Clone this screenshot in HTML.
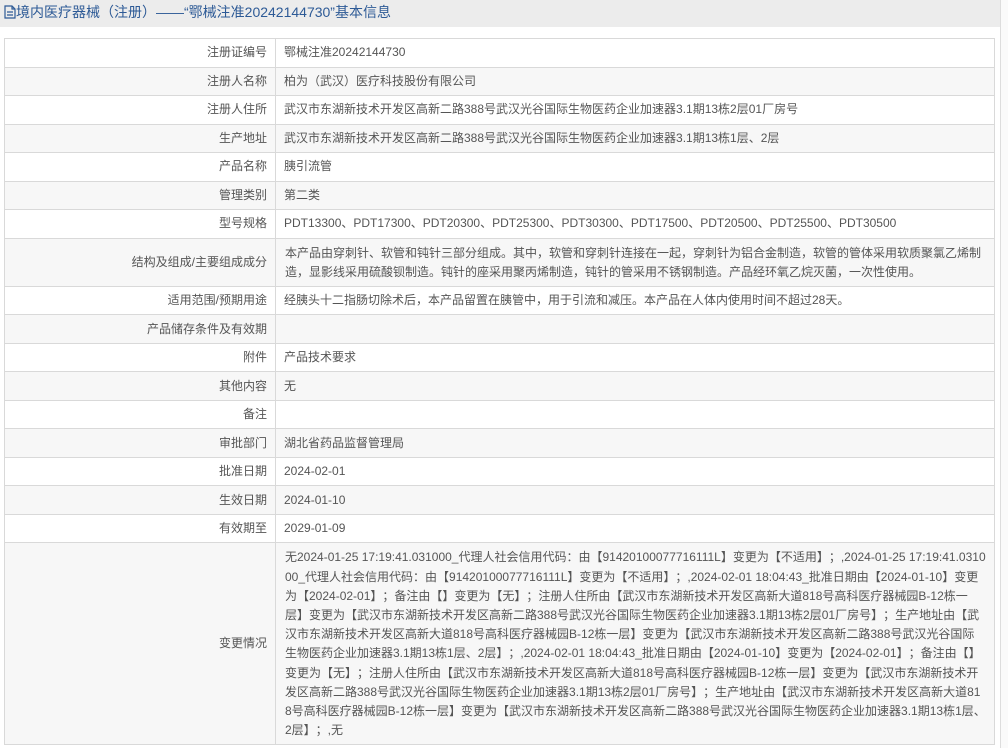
<!DOCTYPE html>
<html><head><meta charset="utf-8"><style>
body{margin:0;background:#fff;font-family:"Liberation Sans","Noto Sans CJK SC",sans-serif;width:1008px;height:748px;overflow:hidden;text-spacing-trim:space-all}
.hd{height:27px;background:#ececec;color:#2d5a96;font-size:14px;line-height:25px;padding-left:4px}
.hd svg{vertical-align:-2px}
table{position:absolute;left:4px;top:38px;width:991px;border-collapse:collapse;font-size:12px;color:#555}
td{border:1px solid #d9d9d9;padding:0 8px;height:27.5px;line-height:19.2px;word-break:break-all}
td.l{width:254px;text-align:right}
tr:nth-child(even) td{background:#f7f7f7}
td.v{padding:5px 8px 4px 9px}
.edge{position:absolute;left:1000px;top:0;width:8px;height:748px;border-left:1px solid #ddd;background:#fafafa}
</style></head><body>
<div class="hd"><svg width="12" height="14" viewBox="0 0 12 14"><path d="M1 1h7l3 3v9H1z M8 1v3h3 M3 7h6 M3 10h6" fill="none" stroke="#2d5a96" stroke-width="1.2"/></svg>境内医疗器械（注册）——“鄂械注准20242144730”基本信息</div>
<table>
<tr><td class="l">注册证编号</td><td>鄂械注准20242144730</td></tr>
<tr><td class="l">注册人名称</td><td>柏为（武汉）医疗科技股份有限公司</td></tr>
<tr><td class="l">注册人住所</td><td>武汉市东湖新技术开发区高新二路388号武汉光谷国际生物医药企业加速器3.1期13栋2层01厂房号</td></tr>
<tr><td class="l">生产地址</td><td>武汉市东湖新技术开发区高新二路388号武汉光谷国际生物医药企业加速器3.1期13栋1层、2层</td></tr>
<tr><td class="l">产品名称</td><td>胰引流管</td></tr>
<tr><td class="l">管理类别</td><td>第二类</td></tr>
<tr><td class="l">型号规格</td><td>PDT13300、PDT17300、PDT20300、PDT25300、PDT30300、PDT17500、PDT20500、PDT25500、PDT30500</td></tr>
<tr><td class="l">结构及组成/主要组成成分</td><td class="v">本产品由穿刺针、软管和钝针三部分组成。其中，软管和穿刺针连接在一起，穿刺针为铝合金制造，软管的管体采用软质聚氯乙烯制造，显影线采用硫酸钡制造。钝针的座采用聚丙烯制造，钝针的管采用不锈钢制造。产品经环氧乙烷灭菌，一次性使用。</td></tr>
<tr><td class="l">适用范围/预期用途</td><td>经胰头十二指肠切除术后，本产品留置在胰管中，用于引流和减压。本产品在人体内使用时间不超过28天。</td></tr>
<tr><td class="l">产品储存条件及有效期</td><td></td></tr>
<tr><td class="l">附件</td><td>产品技术要求</td></tr>
<tr><td class="l">其他内容</td><td>无</td></tr>
<tr><td class="l">备注</td><td></td></tr>
<tr><td class="l">审批部门</td><td>湖北省药品监督管理局</td></tr>
<tr><td class="l">批准日期</td><td>2024-02-01</td></tr>
<tr><td class="l">生效日期</td><td>2024-01-10</td></tr>
<tr><td class="l">有效期至</td><td>2029-01-09</td></tr>
<tr><td class="l">变更情况</td><td class="v">无2024-01-25 17:19:41.031000_代理人社会信用代码：由【91420100077716111L】变更为【不适用】；,2024-01-25 17:19:41.031000_代理人社会信用代码：由【91420100077716111L】变更为【不适用】；,2024-02-01 18:04:43_批准日期由【2024-01-10】变更为【2024-02-01】；备注由【】变更为【无】；注册人住所由【武汉市东湖新技术开发区高新大道818号高科医疗器械园B-12栋一层】变更为【武汉市东湖新技术开发区高新二路388号武汉光谷国际生物医药企业加速器3.1期13栋2层01厂房号】；生产地址由【武汉市东湖新技术开发区高新大道818号高科医疗器械园B-12栋一层】变更为【武汉市东湖新技术开发区高新二路388号武汉光谷国际生物医药企业加速器3.1期13栋1层、2层】；,2024-02-01 18:04:43_批准日期由【2024-01-10】变更为【2024-02-01】；备注由【】变更为【无】；注册人住所由【武汉市东湖新技术开发区高新大道818号高科医疗器械园B-12栋一层】变更为【武汉市东湖新技术开发区高新二路388号武汉光谷国际生物医药企业加速器3.1期13栋2层01厂房号】；生产地址由【武汉市东湖新技术开发区高新大道818号高科医疗器械园B-12栋一层】变更为【武汉市东湖新技术开发区高新二路388号武汉光谷国际生物医药企业加速器3.1期13栋1层、2层】；,无</td></tr>
</table>
<div class="edge"></div>
</body></html>
